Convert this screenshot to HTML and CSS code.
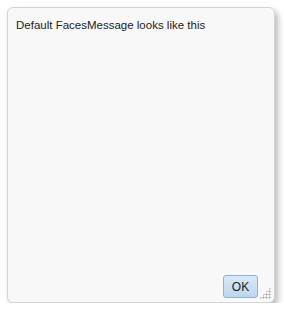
FILE: index.html
```html
<!DOCTYPE html>
<html lang="en">
  <head>
    <meta charset="UTF-8" />
    <title>FacesMessage</title>
    <link rel="stylesheet" href="styles.css">
  </head>
  <body>
    <div class="dialog">
      <div class="content">Default FacesMessage looks like this</div>
      <div class="buttons">
        <button type="button" class="ok">OK</button>
        <span class="grip"></span>
      </div>
    </div>
  </body>
</html>
```

FILE: styles.css
```css
* {
  box-sizing: border-box;
}

body {
  margin: 0;
  padding: 7px 0 0 7px;
  background: #ffffff;
  font-family: "Liberation Sans", Arial, sans-serif;
  font-size: 11.5px;
  color: #222222;
}

.dialog {
  width: 268px;
  height: 296px;
  background: #f8f8f8;
  border: 1px solid #d4d4d4;
  border-radius: 6px;
  box-shadow: 3px 4px 6px rgba(0, 0, 0, 0.28);
  display: flex;
  flex-direction: column;
  position: relative;
}

.content {
  flex: 1;
  padding: 11px 8px;
}

.buttons {
  display: flex;
  justify-content: flex-end;
  padding: 0 16px 4px 0;
}

.ok {
  width: 35px;
  height: 23px;
  border: 1px solid #8fb3d3;
  border-radius: 3px;
  background: linear-gradient(#d9e9f8, #bcd6ef);
  font-family: inherit;
  font-size: 12px;
  color: #222222;
  padding: 0;
}

.grip {
  position: absolute;
  right: 3px;
  bottom: 3px;
  width: 12px;
  height: 12px;
  background-image: radial-gradient(#a0a0a0 0.9px, transparent 1.1px);
  background-size: 3px 3px;
  clip-path: polygon(100% 0, 100% 100%, 0 100%);
}
```
